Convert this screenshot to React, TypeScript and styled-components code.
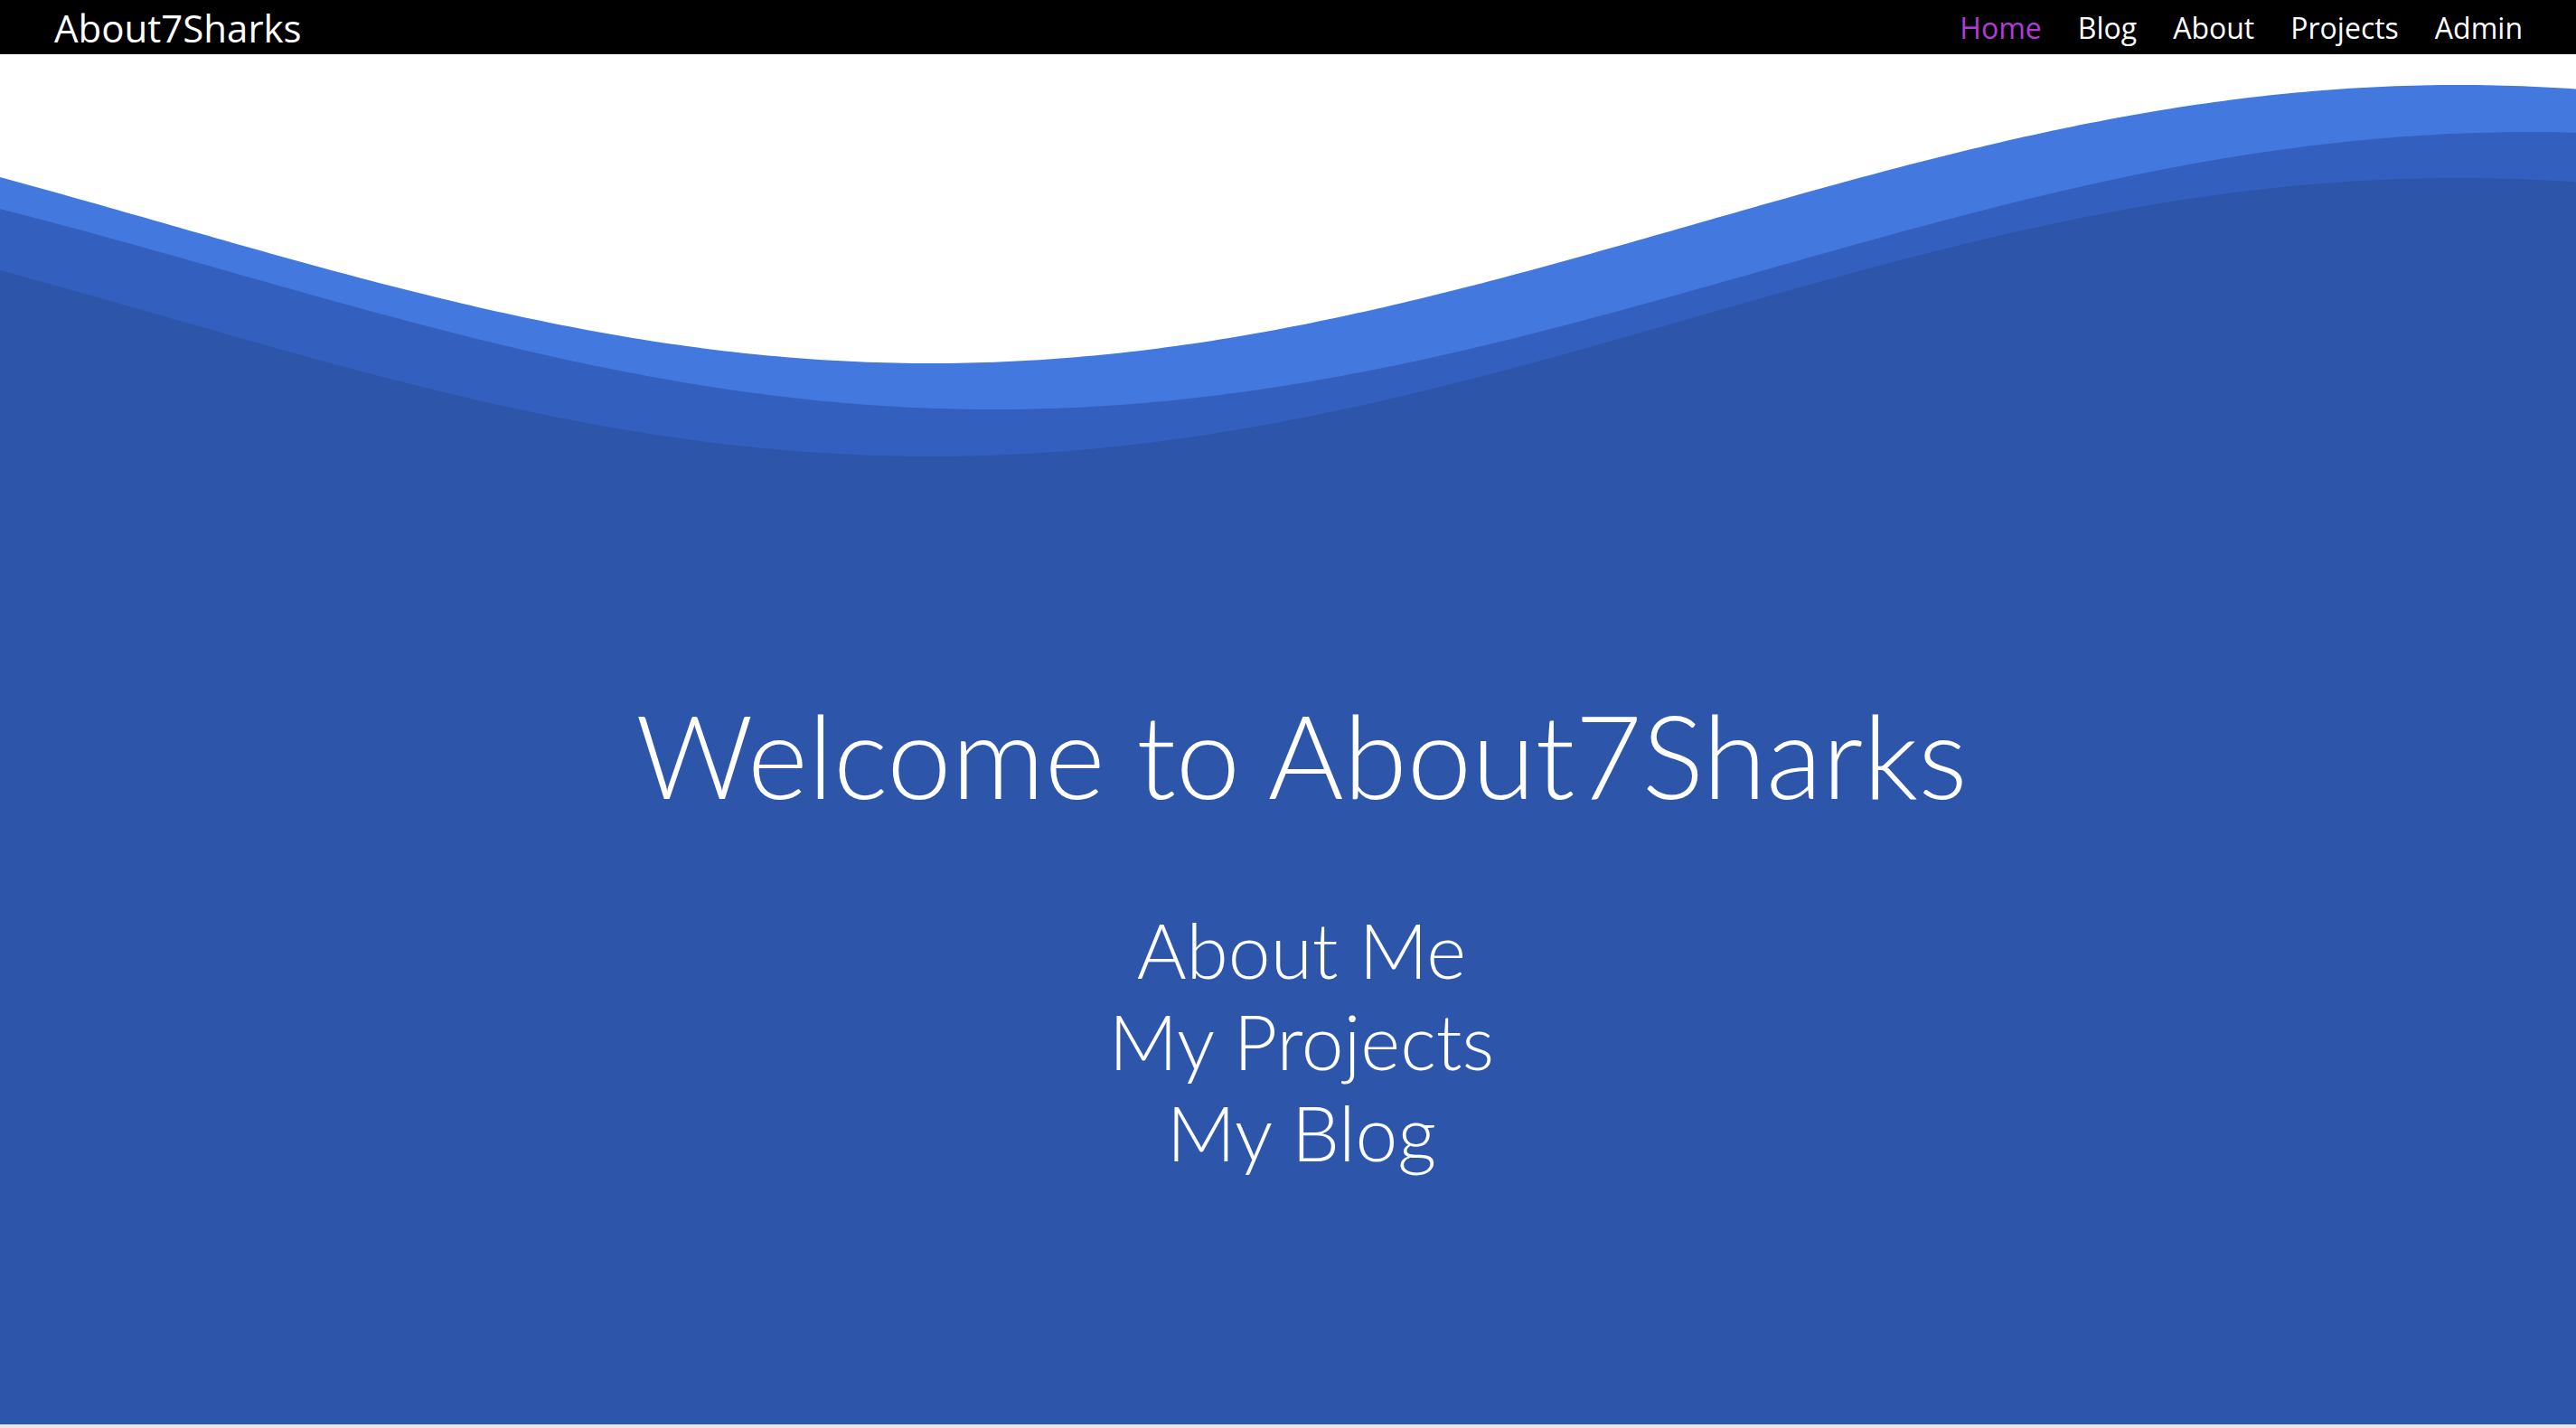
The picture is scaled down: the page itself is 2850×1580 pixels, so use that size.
import React from "react";
import styled, { createGlobalStyle } from "styled-components";

const GlobalStyle = createGlobalStyle`
  html, body {
    margin: 0;
    padding: 0;
    background: #e8e8e8;
  }
  * { box-sizing: border-box; }
`;

const Page = styled.div`
  display: flex;
  flex-direction: column;
  height: 1576px;
`;

const NavBar = styled.nav`
  display: flex;
  align-items: center;
  justify-content: space-between;
  height: 60px;
  padding: 0 59px 0 60px;
  background: #000;
  font-family: "Open Sans", "Liberation Sans", sans-serif;
`;

const Brand = styled.a`
  color: #fff;
  font-size: 42px;
  text-decoration: none;
`;

const NavList = styled.div`
  display: flex;
  align-items: center;
  gap: 40px;
`;

const NavLink = styled.a<{ $active?: boolean }>`
  color: ${(p) => (p.$active ? "#b13bd8" : "#fff")};
  font-size: 32px;
  text-decoration: none;
`;

const Hero = styled.section`
  flex: 1;
  display: flex;
  flex-direction: column;
  background: #fff;
`;

const WaveSvg = styled.svg`
  display: block;
  width: 100%;
  height: 450px;
  flex-shrink: 0;
`;

const Content = styled.div`
  flex: 1;
  display: flex;
  flex-direction: column;
  align-items: center;
  padding: 248px 0 0 30px;
  background: #2d56ab;
  font-family: Lato, "Liberation Sans", sans-serif;
  font-weight: 300;
  color: #fff;
`;

const Title = styled.h1`
  margin: 0;
  font-size: 128px;
  font-weight: 300;
  line-height: 1.2;
`;

const Links = styled.div`
  display: flex;
  flex-direction: column;
  align-items: center;
  margin-top: 88px;
`;

const BigLink = styled.a`
  color: #fff;
  font-size: 84px;
  line-height: 101px;
  text-decoration: none;
`;

const W = 2850;
const H = 450;
const OFFSET = 60;

function wavePath(c: number, a: number, min: number, half: number): string {
  const pts: string[] = [];
  for (let x = 0; x <= W; x += 10) {
    const y = c + a * Math.cos((Math.PI * (x - min)) / half) - OFFSET;
    pts.push(`${x},${y.toFixed(2)}`);
  }
  return `M${pts[0]} L${pts.slice(1).join(" L")} L${W},${H} L0,${H} Z`;
}

const layers = [
  { fill: "#4379df", d: wavePath(248, 154, 1030, 1690) },
  { fill: "#3360bf", d: wavePath(299.5, 153.5, 1100, 1700) },
  { fill: "#2d56ab", d: wavePath(351, 154, 1030, 1690) },
];

export default function App() {
  return (
    <>
      <GlobalStyle />
      <Page>
        <NavBar>
          <Brand href="#">About7Sharks</Brand>
          <NavList>
            <NavLink href="#" $active>Home</NavLink>
            <NavLink href="#">Blog</NavLink>
            <NavLink href="#">About</NavLink>
            <NavLink href="#">Projects</NavLink>
            <NavLink href="#">Admin</NavLink>
          </NavList>
        </NavBar>
        <Hero>
          <WaveSvg viewBox={`0 0 ${W} ${H}`} preserveAspectRatio="none">
            {layers.map((l, i) => (
              <path key={i} d={l.d} fill={l.fill} />
            ))}
          </WaveSvg>
          <Content>
            <Title>Welcome to About7Sharks</Title>
            <Links>
              <BigLink href="#">About Me</BigLink>
              <BigLink href="#">My Projects</BigLink>
              <BigLink href="#">My Blog</BigLink>
            </Links>
          </Content>
        </Hero>
      </Page>
    </>
  );
}
